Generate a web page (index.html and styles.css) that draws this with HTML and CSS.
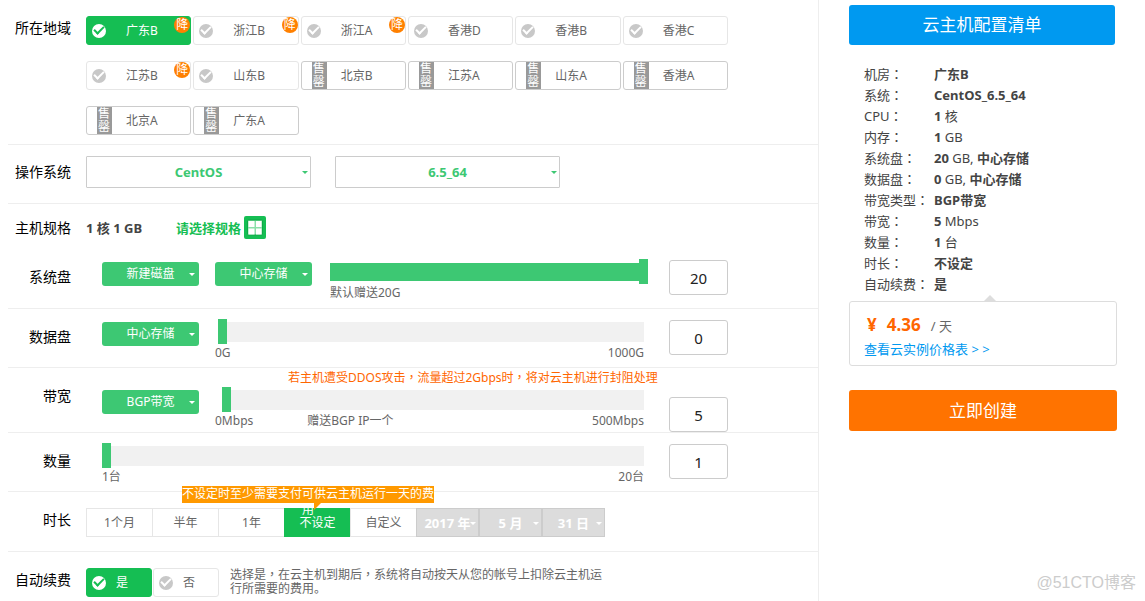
FILE: index.html
```html
<!DOCTYPE html>
<html lang="zh-CN">
<head>
<meta charset="utf-8">
<title>云主机</title>
<link rel="stylesheet" href="styles.css">
</head>
<body>
<form class="config">
  <section class="row row-region">
    <span class="label">所在地域</span>
    <div class="regions">
      <label class="chip chip-on"><input class="tick" type="radio" name="region" checked>广东B<span class="badge">降</span></label>
      <label class="chip"><input class="tick" type="radio" name="region">浙江B<span class="badge">降</span></label>
      <label class="chip"><input class="tick" type="radio" name="region">浙江A<span class="badge">降</span></label>
      <label class="chip"><input class="tick" type="radio" name="region">香港D</label>
      <label class="chip"><input class="tick" type="radio" name="region">香港B</label>
      <label class="chip"><input class="tick" type="radio" name="region">香港C</label>
      <label class="chip"><input class="tick" type="radio" name="region">江苏B<span class="badge">降</span></label>
      <label class="chip"><input class="tick" type="radio" name="region">山东B</label>
      <label class="chip chip-sold"><input class="hidden" type="radio" name="region" disabled><span class="sold">售罄</span>北京B</label>
      <label class="chip chip-sold"><input class="hidden" type="radio" name="region" disabled><span class="sold">售罄</span>江苏A</label>
      <label class="chip chip-sold"><input class="hidden" type="radio" name="region" disabled><span class="sold">售罄</span>山东A</label>
      <label class="chip chip-sold"><input class="hidden" type="radio" name="region" disabled><span class="sold">售罄</span>香港A</label>
      <label class="chip chip-sold"><input class="hidden" type="radio" name="region" disabled><span class="sold">售罄</span>北京A</label>
      <label class="chip chip-sold"><input class="hidden" type="radio" name="region" disabled><span class="sold">售罄</span>广东A</label>
    </div>
  </section>

  <section class="row row-os">
    <label class="label" for="os">操作系统</label>
    <div class="os-list">
      <div class="pick pick-os"><select id="os"><option>CentOS</option></select></div>
      <div class="pick pick-os"><select aria-label="版本"><option>6.5_64</option></select></div>
    </div>
  </section>

  <section class="row row-spec">
    <span class="label">主机规格</span>
    <div class="spec">
      <strong class="spec-now">1 核 1 GB</strong>
      <button class="spec-pick" type="button">请选择规格
        <svg class="spec-icon" viewBox="0 0 22 23"><rect width="22" height="23" rx="2" fill="#15be53"/><rect x="3.5" y="4" width="15" height="15" rx="1" fill="#8be0a9" stroke="#0fa847"/><path d="M4.500 5h6v6h-6zM12 5h5.500v6H12zM4.500 12.500h6v6h-6zM12 12.500h5.500v6H12z" fill="#fff"/></svg>
      </button>
    </div>
    <label class="label" for="sys">系统盘</label>
    <div class="body">
      <div class="pick pick-green"><select aria-label="磁盘"><option>新建磁盘</option></select></div>
      <div class="pick pick-green"><select aria-label="系统盘存储"><option>中心存储</option></select></div>
      <div class="slider slider-sys">
        <input class="range range-full" type="range" min="0" max="20" value="20" aria-label="系统盘容量">
        <div class="scale"><span>默认赠送20G</span></div>
      </div>
      <input class="number" id="sys" type="text" value="20">
    </div>
  </section>

  <section class="row row-slide">
    <label class="label" for="data">数据盘</label>
    <div class="body">
      <div class="pick pick-green"><select aria-label="数据盘存储"><option>中心存储</option></select></div>
      <div class="slider">
        <input class="range range-inset" type="range" min="0" max="1000" value="0" aria-label="数据盘容量">
        <div class="scale"><span>0G</span><span>1000G</span></div>
      </div>
      <input class="number" id="data" type="text" value="0">
    </div>
  </section>

  <section class="row row-band">
    <label class="label" for="band">带宽</label>
    <div>
      <p class="warning">若主机遭受DDOS攻击<span class="punct">，</span>流量超过2Gbps时<span class="punct">，</span>将对云主机进行封阻处理</p>
      <div class="body">
        <div class="pick pick-green"><select aria-label="带宽类型"><option>BGP带宽</option></select></div>
        <div class="slider">
          <input class="range range-inset" type="range" min="0" max="500" value="5" style="--fill:1%" aria-label="带宽大小">
          <div class="scale"><span>0Mbps</span><span class="gift">赠送BGP IP一个</span><span>500Mbps</span></div>
        </div>
        <input class="number" id="band" type="text" value="5">
      </div>
    </div>
  </section>

  <section class="row row-slide">
    <label class="label" for="count">数量</label>
    <div class="body">
      <div class="slider">
        <input class="range" type="range" min="1" max="20" value="1" aria-label="台数">
        <div class="scale"><span>1台</span><span>20台</span></div>
      </div>
      <input class="number" id="count" type="text" value="1">
    </div>
  </section>

  <section class="row row-time">
    <span class="label">时长</span>
    <div class="segments">
      <button class="segment" type="button">1个月</button>
      <button class="segment" type="button">半年</button>
      <button class="segment" type="button">1年</button>
      <button class="segment segment-on" type="button">不设定<span class="tip">不设定时至少需要支付可供云主机运行一天的费用</span></button>
      <button class="segment" type="button">自定义</button>
      <div class="pick pick-date"><select aria-label="年" disabled><option>2017 年</option></select></div>
      <div class="pick pick-date"><select aria-label="月" disabled><option>5 月</option></select></div>
      <div class="pick pick-date"><select aria-label="日" disabled><option>31 日</option></select></div>
    </div>
  </section>

  <section class="row row-renew">
    <span class="label">自动续费</span>
    <div class="renew">
      <label class="chip chip-small chip-on"><input class="tick" type="radio" name="renew" checked>是</label>
      <label class="chip chip-small"><input class="tick" type="radio" name="renew">否</label>
      <p class="note">选择是<span class="punct">，</span>在云主机到期后<span class="punct">，</span>系统将自动按天从您的帐号上扣除云主机运行所需要的费用。</p>
    </div>
  </section>
</form>

<aside class="summary">
  <h1 class="title">云主机配置清单</h1>
  <dl class="facts">
    <dt>机房<span class="punct">：</span></dt><dd><b>广东B</b></dd>
    <dt>系统<span class="punct">：</span></dt><dd><b>CentOS_6.5_64</b></dd>
    <dt>CPU<span class="punct">：</span></dt><dd><b>1</b> 核</dd>
    <dt>内存<span class="punct">：</span></dt><dd><b>1</b> GB</dd>
    <dt>系统盘<span class="punct">：</span></dt><dd><b>20</b> GB, <b>中心存储</b></dd>
    <dt>数据盘<span class="punct">：</span></dt><dd><b>0</b> GB, <b>中心存储</b></dd>
    <dt>带宽类型<span class="punct">：</span></dt><dd><b>BGP带宽</b></dd>
    <dt>带宽<span class="punct">：</span></dt><dd><b>5</b> Mbps</dd>
    <dt>数量<span class="punct">：</span></dt><dd><b>1</b> 台</dd>
    <dt>时长<span class="punct">：</span></dt><dd><b>不设定</b></dd>
    <dt>自动续费<span class="punct">：</span></dt><dd><b>是</b></dd>
  </dl>
  <div class="price">
    <div class="price-line"><b class="amount">¥</b><b class="amount">4.36</b><span>/ 天</span></div>
    <a class="price-link" href="#">查看云实例价格表 &gt; &gt;</a>
  </div>
  <button class="create" type="button">立即创建</button>
</aside>
<div class="watermark">@51CTO博客</div>
</body>
</html>
```
FILE: styles.css
```css
* { box-sizing: border-box; }

body {
  margin: 0;
  min-height: 100vh;
  display: flex;
  position: relative;
  background: #fff;
  color: #666;
  font: 12px/18px "Noto Sans", "Noto Sans CJK SC", sans-serif;
}

button, input, select { font: inherit; color: inherit; margin: 0; }
p, dl, dd, h1 { margin: 0; }

/* full-width marks centred in their cell */
.punct {
  font-family: "Noto Sans CJK TC", sans-serif;
  font-feature-settings: "locl" 0;
  line-height: 1;
}

.hidden { position: absolute; opacity: 0; }

/* form */
.config {
  flex: 1;
  min-width: 0;
  padding-left: 8px;
  border-right: 1px solid #eee;
}

.row {
  display: grid;
  grid-template-columns: 63px minmax(0, 642px);
  column-gap: 15px;
  border-bottom: 1px solid #eee;
}

.label {
  color: #000;
  font-size: 14px;
  text-align: right;
  align-self: center;
}

.row-region { padding: 16px 0 9px; }
.row-region .label { align-self: start; line-height: 24px; }
.row-os { padding: 11px 0 15px; }
.row-spec { padding: 12px 0 6px; row-gap: 20px; }
.row-spec .label { align-self: start; line-height: 23px; }
.row-spec .label[for] { line-height: 36px; }
.row-slide { padding: 10px 0 5px; }
.row-slide .label { align-self: start; line-height: 36px; }
.row-band { padding: 1px 0 2px; }
.row-band .label { align-self: start; line-height: 54px; }
.row-time { padding: 16px 0 14px; }
.row-time .label { align-self: start; line-height: 24px; }
.row-renew { padding: 16px 0 0; border-bottom: 0; }
.row-renew .label { align-self: start; line-height: 24px; }

/* region chips */
.regions {
  display: grid;
  grid-template-columns: repeat(6, 1fr);
  gap: 16px 2px;
}

.chip {
  position: relative;
  display: flex;
  align-items: center;
  gap: 20px;
  height: 29px;
  padding-left: 5px;
  border: 1px solid #e6e6e6;
  border-radius: 3px;
}

.chip-on { background: #15be53; border-color: #15be53; color: #fff; }
.chip-sold { gap: 14px; padding-left: 10px; border-color: #ccc; }
.chip-small { width: 66px; gap: 10px; }

.tick {
  appearance: none;
  display: grid;
  place-items: center;
  width: 14px;
  height: 14px;
  border-radius: 50%;
  background: #c8c8c8;
}

.tick::after {
  content: "";
  width: 8px;
  height: 4px;
  margin-bottom: 3px;
  border: solid #fff;
  border-width: 0 0 2px 2px;
  transform: rotate(-45deg);
}

.tick:checked { background: #fff; }
.tick:checked::after { border-color: #15be53; }

.sold {
  width: 15px;
  height: 27px;
  padding: 0 1px;
  background: #999;
  color: #fff;
  line-height: 13px;
  word-break: break-all;
}

.badge {
  position: absolute;
  top: 0;
  right: 0;
  width: 16px;
  height: 16px;
  border-radius: 50%;
  background: #ff8000;
  color: #fff;
  line-height: 16px;
  text-align: center;
}

/* drop-downs */
.pick { position: relative; color: #fff; }

.pick select {
  appearance: none;
  display: block;
  width: 100%;
  height: 100%;
  padding: 0;
  border: 0;
  background: none;
  text-align: center;
  text-align-last: center;
  opacity: 1;
}

.pick::after {
  content: "";
  position: absolute;
  top: 50%;
  right: 4px;
  margin-top: -1px;
  border: 3px solid transparent;
  border-top-color: currentColor;
  border-bottom: 0;
  pointer-events: none;
}

.os-list { display: flex; gap: 24px; }

.pick-os {
  width: 225px;
  height: 32px;
  border: 1px solid #ccc;
  border-radius: 1px;
  color: #3dc873;
  font-size: 13px;
  font-weight: bold;
}

.pick-os::after { right: 2px; }

.pick-green {
  width: 97px;
  height: 24px;
  margin: 3px 16px 0 0;
  border-radius: 3px;
  background: #3dc873;
}

/* spec */
.spec { display: flex; align-items: center; gap: 34px; height: 23px; color: #444; font-size: 13px; }

.spec-pick {
  display: flex;
  align-items: center;
  gap: 3px;
  padding: 0;
  border: 0;
  background: none;
  color: #15be53;
  font-weight: bold;
}

.spec-icon { width: 22px; height: 23px; }

/* sliders */
.body {
  display: flex;
  align-items: flex-start;
  padding-left: 16px;
}

.slider { flex: 1; min-width: 0; margin-right: 25px; }
.slider-sys { margin: 0 21px 0 2px; }

.range {
  appearance: none;
  display: block;
  width: 100%;
  height: 25px;
  background: none;
}

.range::-webkit-slider-runnable-track {
  height: 20px;
  background: linear-gradient(to right, #fff var(--fill, 0%), #f1f1f1 var(--fill, 0%));
}

.range::-webkit-slider-thumb {
  appearance: none;
  width: 9px;
  height: 25px;
  margin-top: -3px;
  background: #3dc873;
}

.range-inset { width: calc(100% - 3px); margin-left: 3px; }

.range-full::-webkit-slider-runnable-track {
  background: linear-gradient(#3dc873, #3dc873) 0 1px / calc(100% - 4px) 18px no-repeat;
}

.scale { display: flex; justify-content: space-between; height: 18px; }
.gift { flex: 1; padding-left: 54px; }

.number {
  width: 59px;
  height: 35px;
  margin-top: 1px;
  padding: 0;
  border: 1px solid #ccc;
  border-radius: 3px;
  background: #fff;
  color: #222;
  font-size: 15px;
  text-align: center;
}

.row-band .body { height: 43px; }
.row-band .number { margin-top: 10px; }
.warning { height: 18px; padding-left: 202px; color: #ff6600; }

/* duration */
.segments { display: flex; }

.segment {
  position: relative;
  width: 66px;
  height: 29px;
  padding: 0;
  border: 1px solid #e6e6e6;
  border-right-width: 0;
  background: #fff;
}

.segment-on { border-color: #15be53; background: #15be53; color: #fff; }

.tip {
  position: absolute;
  top: -23px;
  left: -103px;
  width: 252px;
  height: 17px;
  background: #ff9900;
  line-height: 16px;
}

.tip::after {
  content: "";
  position: absolute;
  top: 17px;
  left: 132px;
  border-top: 7px solid #ff9900;
  border-right: 7px solid transparent;
}

.pick-date {
  width: 63px;
  height: 29px;
  border: 1px solid #ccc;
  background: #dcdcdc;
  font-size: 13px;
  font-weight: bold;
}

.pick-date::after { right: 2px; }

/* renewal */
.renew { display: flex; gap: 1px; }
.note { max-width: 386px; padding-left: 10px; line-height: 14px; }

/* summary */
.summary {
  flex: 0 0 326px;
  padding: 5px 28px 0 30px;
  color: #444;
  font-size: 13px;
}

.title {
  margin-right: 2px;
  border-radius: 3px;
  background: #0099f0;
  color: #fff;
  font-size: 17px;
  font-weight: normal;
  line-height: 40px;
  text-align: center;
}

.facts {
  display: grid;
  grid-template-columns: 70px 1fr;
  grid-auto-rows: 21px;
  margin-top: 19px;
  padding-left: 15px;
  line-height: 21px;
}

.facts dt { white-space: nowrap; }

.price {
  position: relative;
  margin: 6px 0 24px;
  padding: 10px 14px 3px;
  border: 1px solid #ddd;
  border-radius: 3px;
  line-height: 25px;
}

.price::before {
  content: "";
  position: absolute;
  bottom: 100%;
  left: 133px;
  border: 7px solid transparent;
  border-top: 0;
  border-bottom-color: #ddd;
}

.price-line { display: flex; align-items: baseline; gap: 10px; padding-left: 3px; height: 25px; color: #666; }
.amount { color: #ff6600; font-size: 17px; }
.price-link { color: #0099f0; text-decoration: none; }

.create {
  display: block;
  width: 100%;
  height: 41px;
  padding: 0;
  border: 0;
  border-radius: 3px;
  background: #ff7300;
  color: #fff;
  font-size: 17px;
}

.watermark {
  position: absolute;
  right: 9px;
  bottom: 8px;
  color: #ccc;
  font: 16px/20px "Liberation Sans", "Noto Sans CJK SC", sans-serif;
}
```
